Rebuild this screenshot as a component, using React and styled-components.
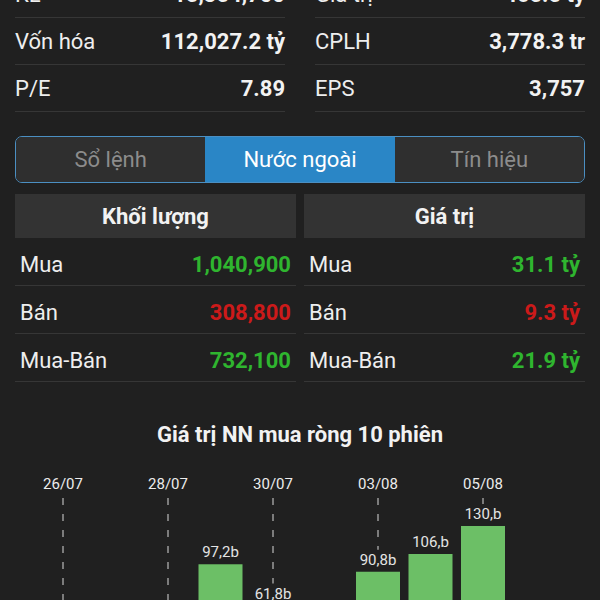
import styled, { createGlobalStyle } from "styled-components";

const GlobalStyle = createGlobalStyle`
  body {
    margin: 0;
    background: #202020;
    overflow: hidden;
    font-family: Roboto, "Noto Sans", sans-serif;
    color: #eeeeee;
  }
`;

const Page = styled.div`
  margin-top: -29px;
  width: 600px;
`;

const StatsGrid = styled.div`
  display: grid;
  grid-template-columns: 1fr 1fr;
  column-gap: 30px;
  padding: 0 15px;
`;

const StatRow = styled.div`
  display: flex;
  justify-content: space-between;
  align-items: center;
  height: 46px;
  border-bottom: 1px solid #363636;
  font-size: 22px;
`;

const StatLabel = styled.span`
  color: #eeeeee;
`;

const StatValue = styled.span`
  font-weight: 700;
  color: #f2f2f2;
`;

const Tabs = styled.div`
  display: flex;
  margin: 24px 15px 0;
  height: 45px;
  border: 1px solid #4b8fc2;
  border-radius: 7px;
  overflow: hidden;
`;

const Tab = styled.div`
  flex: 1;
  display: flex;
  align-items: center;
  justify-content: center;
  font-size: 22px;
  background: ${({ $active }) => ($active ? "#2a86c6" : "#2f2f2f")};
  color: ${({ $active }) => ($active ? "#ffffff" : "#8c8c8c")};
`;

const Tables = styled.div`
  display: grid;
  grid-template-columns: 1fr 1fr;
  column-gap: 8px;
  margin: 11px 15px 0;
`;

const Table = styled.div`
  display: flex;
  flex-direction: column;
`;

const TableHead = styled.div`
  height: 44px;
  display: flex;
  align-items: center;
  justify-content: center;
  background: #333333;
  font-weight: 700;
  font-size: 22px;
  color: #f2f2f2;
`;

const TableRow = styled.div`
  display: flex;
  justify-content: space-between;
  align-items: center;
  height: 48px;
  padding: 5px 5px 0;
  box-sizing: border-box;
  border-bottom: 1px solid #363636;
  font-size: 22px;
`;

const Cell = styled.span`
  font-weight: 700;
  color: ${({ $tone }) => ($tone === "down" ? "#cc1a1a" : "#2fb52f")};
`;

const ChartTitle = styled.div`
  margin-top: 40px;
  line-height: 26px;
  text-align: center;
  font-weight: 700;
  font-size: 22px;
  color: #f2f2f2;
`;

const ChartBox = styled.svg`
  display: block;
  margin-top: 13px;
`;

const stats = [
  ["KL", "15,354,700"],
  ["Giá trị", "465.5 tỷ"],
  ["Vốn hóa", "112,027.2 tỷ"],
  ["CPLH", "3,778.3 tr"],
  ["P/E", "7.89"],
  ["EPS", "3,757"],
];

const volume = [
  ["Mua", "1,040,900", "up"],
  ["Bán", "308,800", "down"],
  ["Mua-Bán", "732,100", "up"],
];

const value = [
  ["Mua", "31.1 tỷ", "up"],
  ["Bán", "9.3 tỷ", "down"],
  ["Mua-Bán", "21.9 tỷ", "up"],
];

const bars = [
  { d: "26/07", v: 12, label: "12,4b" },
  { d: "27/07", v: 30, label: "30,1b" },
  { d: "28/07", v: 20, label: "20,5b" },
  { d: "29/07", v: 97.2, label: "97,2b" },
  { d: "30/07", v: 61.8, label: "61,8b" },
  { d: "02/08", v: 25, label: "25,3b" },
  { d: "03/08", v: 90.8, label: "90,8b" },
  { d: "04/08", v: 106, label: "106,b" },
  { d: "05/08", v: 130, label: "130,b" },
  { d: "06/08", v: 40, label: "40,2b" },
];

// chart svg starts at page y = 460
const TOP = 460;
const BASE = 676.7 - TOP;
const SCALE = 1.167;

function Chart() {
  return (
    <ChartBox width="600" height="160" viewBox="0 0 600 160">
      {bars.map((b, i) => {
        const x = 63 + 52.5 * i;
        const top = BASE - b.v * SCALE;
        if (i % 2 !== 0) return null;
        return (
          <g key={b.d}>
            <text x={x} y="28" fill="#ececec" fontSize="15" textAnchor="middle" fontFamily="Roboto, sans-serif">
              {b.d}
            </text>
            <line
              x1={x}
              x2={x}
              y1="37"
              y2={Math.min(160, top - 22)}
              stroke="#9a9a9a"
              strokeWidth="1.5"
              strokeDasharray="7 9"
            />
          </g>
        );
      })}
      {bars.map((b, i) => {
        const x = 63 + 52.5 * i;
        const top = BASE - b.v * SCALE;
        return (
          <g key={b.d + "b"}>
            <rect x={x - 22} y={top} width="44" height={BASE - top} fill="#6cbf66" />
            <text x={x} y={top - 7} fill="#e4e4e4" fontSize="15" textAnchor="middle" fontFamily="Roboto, sans-serif">
              {b.label}
            </text>
          </g>
        );
      })}
    </ChartBox>
  );
}

export default function App() {
  return (
    <Page>
      <GlobalStyle />
      <StatsGrid>
        {stats.map(([k, v]) => (
          <StatRow key={k}>
            <StatLabel>{k}</StatLabel>
            <StatValue>{v}</StatValue>
          </StatRow>
        ))}
      </StatsGrid>

      <Tabs>
        <Tab>Sổ lệnh</Tab>
        <Tab $active>Nước ngoài</Tab>
        <Tab>Tín hiệu</Tab>
      </Tabs>

      <Tables>
        <Table>
          <TableHead>Khối lượng</TableHead>
          {volume.map(([k, v, t]) => (
            <TableRow key={k}>
              <span>{k}</span>
              <Cell $tone={t}>{v}</Cell>
            </TableRow>
          ))}
        </Table>
        <Table>
          <TableHead>Giá trị</TableHead>
          {value.map(([k, v, t]) => (
            <TableRow key={k}>
              <span>{k}</span>
              <Cell $tone={t}>{v}</Cell>
            </TableRow>
          ))}
        </Table>
      </Tables>

      <ChartTitle>Giá trị NN mua ròng 10 phiên</ChartTitle>
      <Chart />
    </Page>
  );
}
